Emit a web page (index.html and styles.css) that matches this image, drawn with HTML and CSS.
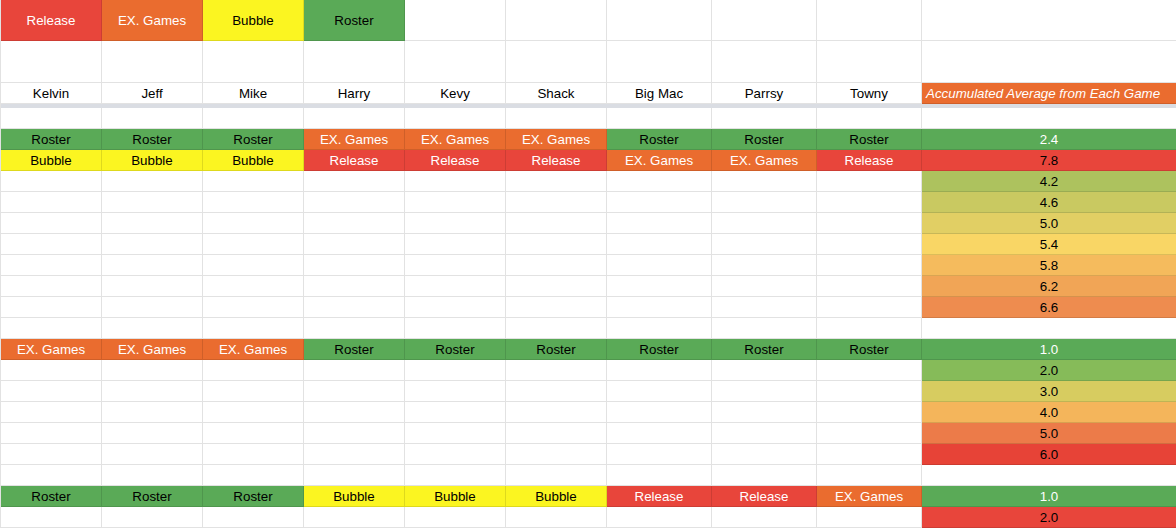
FILE: index.html
```html
<!DOCTYPE html>
<html>
<head>
<meta charset="utf-8">
<link rel="stylesheet" href="styles.css">
</head>
<body>
<div class="sheet">
  <div class="row tall">
    <div class="c rel">Release</div><div class="c exg">EX. Games</div><div class="c bub">Bubble</div><div class="c ros">Roster</div>
    <div class="c"></div><div class="c"></div><div class="c"></div><div class="c"></div><div class="c"></div><div class="c"></div>
  </div>
  <div class="row tall2">
    <div class="c"></div><div class="c"></div><div class="c"></div><div class="c"></div><div class="c"></div><div class="c"></div><div class="c"></div><div class="c"></div><div class="c"></div><div class="c"></div>
  </div>
  <div class="row">
    <div class="c">Kelvin</div><div class="c">Jeff</div><div class="c">Mike</div><div class="c">Harry</div><div class="c">Kevy</div><div class="c">Shack</div><div class="c">Big Mac</div><div class="c">Parrsy</div><div class="c">Towny</div><div class="c hdr">Accumulated Average from Each Game</div>
  </div>
  <div class="freeze"></div>
  <div class="row">
    <div class="c"></div><div class="c"></div><div class="c"></div><div class="c"></div><div class="c"></div><div class="c"></div><div class="c"></div><div class="c"></div><div class="c"></div><div class="c"></div>
  </div>
  <div class="row">
    <div class="c ros">Roster</div><div class="c ros">Roster</div><div class="c ros">Roster</div><div class="c exg">EX. Games</div><div class="c exg">EX. Games</div><div class="c exg">EX. Games</div><div class="c ros">Roster</div><div class="c ros">Roster</div><div class="c ros">Roster</div><div class="c v-green">2.4</div>
  </div>
  <div class="row">
    <div class="c bub">Bubble</div><div class="c bub">Bubble</div><div class="c bub">Bubble</div><div class="c rel">Release</div><div class="c rel">Release</div><div class="c rel">Release</div><div class="c exg">EX. Games</div><div class="c exg">EX. Games</div><div class="c rel">Release</div><div class="c v-red">7.8</div>
  </div>
  <div class="row">
    <div class="c"></div><div class="c"></div><div class="c"></div><div class="c"></div><div class="c"></div><div class="c"></div><div class="c"></div><div class="c"></div><div class="c"></div><div class="c v42">4.2</div>
  </div>
  <div class="row">
    <div class="c"></div><div class="c"></div><div class="c"></div><div class="c"></div><div class="c"></div><div class="c"></div><div class="c"></div><div class="c"></div><div class="c"></div><div class="c v46">4.6</div>
  </div>
  <div class="row">
    <div class="c"></div><div class="c"></div><div class="c"></div><div class="c"></div><div class="c"></div><div class="c"></div><div class="c"></div><div class="c"></div><div class="c"></div><div class="c v50">5.0</div>
  </div>
  <div class="row">
    <div class="c"></div><div class="c"></div><div class="c"></div><div class="c"></div><div class="c"></div><div class="c"></div><div class="c"></div><div class="c"></div><div class="c"></div><div class="c v54">5.4</div>
  </div>
  <div class="row">
    <div class="c"></div><div class="c"></div><div class="c"></div><div class="c"></div><div class="c"></div><div class="c"></div><div class="c"></div><div class="c"></div><div class="c"></div><div class="c v58">5.8</div>
  </div>
  <div class="row">
    <div class="c"></div><div class="c"></div><div class="c"></div><div class="c"></div><div class="c"></div><div class="c"></div><div class="c"></div><div class="c"></div><div class="c"></div><div class="c v62">6.2</div>
  </div>
  <div class="row">
    <div class="c"></div><div class="c"></div><div class="c"></div><div class="c"></div><div class="c"></div><div class="c"></div><div class="c"></div><div class="c"></div><div class="c"></div><div class="c v66">6.6</div>
  </div>
  <div class="row">
    <div class="c"></div><div class="c"></div><div class="c"></div><div class="c"></div><div class="c"></div><div class="c"></div><div class="c"></div><div class="c"></div><div class="c"></div><div class="c"></div>
  </div>
  <div class="row">
    <div class="c exg">EX. Games</div><div class="c exg">EX. Games</div><div class="c exg">EX. Games</div><div class="c ros">Roster</div><div class="c ros">Roster</div><div class="c ros">Roster</div><div class="c ros">Roster</div><div class="c ros">Roster</div><div class="c ros">Roster</div><div class="c v-green">1.0</div>
  </div>
  <div class="row">
    <div class="c"></div><div class="c"></div><div class="c"></div><div class="c"></div><div class="c"></div><div class="c"></div><div class="c"></div><div class="c"></div><div class="c"></div><div class="c w20">2.0</div>
  </div>
  <div class="row">
    <div class="c"></div><div class="c"></div><div class="c"></div><div class="c"></div><div class="c"></div><div class="c"></div><div class="c"></div><div class="c"></div><div class="c"></div><div class="c w30">3.0</div>
  </div>
  <div class="row">
    <div class="c"></div><div class="c"></div><div class="c"></div><div class="c"></div><div class="c"></div><div class="c"></div><div class="c"></div><div class="c"></div><div class="c"></div><div class="c w40">4.0</div>
  </div>
  <div class="row">
    <div class="c"></div><div class="c"></div><div class="c"></div><div class="c"></div><div class="c"></div><div class="c"></div><div class="c"></div><div class="c"></div><div class="c"></div><div class="c w50">5.0</div>
  </div>
  <div class="row">
    <div class="c"></div><div class="c"></div><div class="c"></div><div class="c"></div><div class="c"></div><div class="c"></div><div class="c"></div><div class="c"></div><div class="c"></div><div class="c w60">6.0</div>
  </div>
  <div class="row">
    <div class="c"></div><div class="c"></div><div class="c"></div><div class="c"></div><div class="c"></div><div class="c"></div><div class="c"></div><div class="c"></div><div class="c"></div><div class="c"></div>
  </div>
  <div class="row">
    <div class="c ros">Roster</div><div class="c ros">Roster</div><div class="c ros">Roster</div><div class="c bub">Bubble</div><div class="c bub">Bubble</div><div class="c bub">Bubble</div><div class="c rel">Release</div><div class="c rel">Release</div><div class="c exg">EX. Games</div><div class="c v-green">1.0</div>
  </div>
  <div class="row">
    <div class="c"></div><div class="c"></div><div class="c"></div><div class="c"></div><div class="c"></div><div class="c"></div><div class="c"></div><div class="c"></div><div class="c"></div><div class="c v-red">2.0</div>
  </div>
</div>
</body>
</html>
```
FILE: styles.css
```css
html, body {
  margin: 0;
  padding: 0;
  background: #ffffff;
  overflow: hidden;
}
body {
  font-family: "Liberation Sans", Arial, sans-serif;
  font-size: 13.33px;
  color: #000000;
}
.sheet {
  width: 1176px;
  border-left: 1px solid #e2e2e2;
  box-sizing: border-box;
}
.row {
  display: grid;
  grid-template-columns: 101px 101px 101px 101px 101px 101px 105px 105px 105px 1fr;
  height: 21px;
}
.row.tall {
  height: 41px;
}
.row.tall2 {
  height: 42px;
}
.c {
  box-sizing: border-box;
  border-right: 1px solid rgba(0, 0, 0, 0.115);
  border-bottom: 1px solid rgba(0, 0, 0, 0.115);
  display: flex;
  align-items: center;
  justify-content: center;
  white-space: nowrap;
  overflow: hidden;
  line-height: 15px;
  padding-top: 1px;
}
.tall .c {
  padding-top: 0;
}
.c:last-child {
  border-right: none;
}
.freeze {
  height: 4px;
  background: #dadde3;
}
.rel { background: #e8453b; color: #ffffff; }
.exg { background: #ea6c2f; color: #ffffff; }
.bub { background: #fbf521; color: #000000; }
.ros { background: #5aaa57; color: #000000; }
.hdr {
  background: #ea6c2f;
  color: #ffffff;
  font-style: italic;
  justify-content: flex-start;
  padding-left: 4px;
}
.v-green { background: #5aaa57; color: #ffffff; }
.v-red { background: #e8453b; color: #000000; }
.v42 { background: #adc25e; }
.v46 { background: #c9c961; }
.v50 { background: #e1cf64; }
.v54 { background: #f9d665; }
.v58 { background: #f5bb5d; }
.v62 { background: #f1a556; }
.v66 { background: #ee8c4f; }
.w20 { background: #86bb59; }
.w30 { background: #d7cc60; }
.w40 { background: #f4b55b; }
.w50 { background: #ec7b49; }
.w60 { background: #e74337; }
```
